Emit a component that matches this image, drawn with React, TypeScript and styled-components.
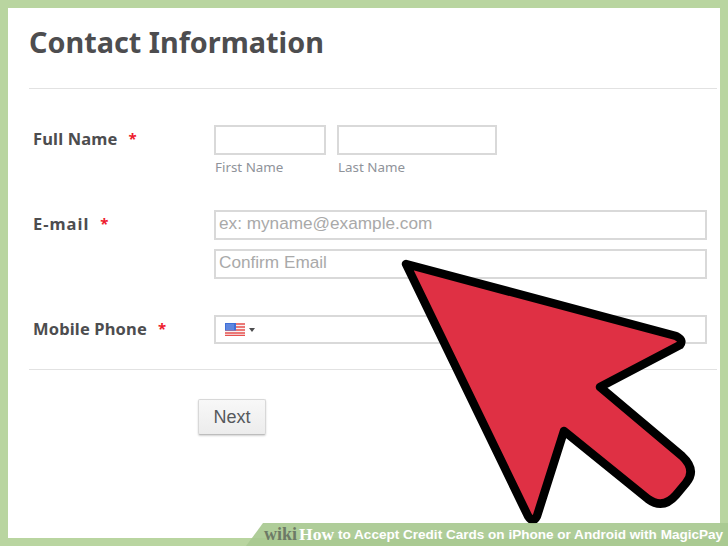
import React from 'react';
import styled, { createGlobalStyle } from 'styled-components';

const GlobalStyle = createGlobalStyle`
  html, body {
    margin: 0;
    padding: 0;
    background: #fff;
  }
`;

const Frame = styled.div`
  position: relative;
  box-sizing: border-box;
  width: 728px;
  height: 546px;
  padding: 8px;
  overflow: hidden;
  background: #b9d5a0;
  font-family: 'Noto Sans', sans-serif;
`;

const Sheet = styled.main`
  box-sizing: border-box;
  height: 530px;
  padding: 0 0 0 21px;
  background: #fff;
  color: #4d4d4f;
`;

const Title = styled.h1`
  margin: 0 3px 0 0;
  height: 81px;
  padding-top: 15px;
  box-sizing: border-box;
  font-size: 28.8px;
  line-height: 38px;
  font-weight: 700;
  border-bottom: 1px solid #e2e2e2;
`;

const Row = styled.section<{ $top: number }>`
  display: grid;
  grid-template-columns: 185px 1fr;
  margin-top: ${(p) => p.$top}px;
  padding-right: 13px;
`;

const Label = styled.div<{ $spacing?: number }>`
  display: flex;
  gap: 11px;
  padding: 3px 0 0 4px;
  font-size: 16.5px;
  line-height: 22px;
  font-weight: 700;
  letter-spacing: ${(p) => p.$spacing ?? 0.15}px;
`;

const Star = styled.span`
  color: #ee1c2e;
  font-size: 15px;
  line-height: 20px;
`;

const Fields = styled.div`
  display: flex;
  flex-direction: column;
  gap: 9px;
`;

const NameFields = styled.div`
  display: flex;
  gap: 11px;
`;

const NameField = styled.div<{ $width: number }>`
  display: flex;
  flex-direction: column;
  gap: 4px;
  width: ${(p) => p.$width}px;
`;

const Box = styled.div`
  box-sizing: border-box;
  display: flex;
  align-items: center;
  height: 30px;
  padding: 0 0 3px 3px;
  border: 2px solid #d9d9d9;
  background: #fff;
  color: #a9a9a9;
  font-family: 'Liberation Sans', Arial, sans-serif;
  font-size: 17.2px;
`;

const Hint = styled.div`
  padding-left: 1px;
  font-size: 13.4px;
  line-height: 17px;
  color: #8f939a;
`;

const PhoneBox = styled(Box)`
  height: 29px;
  gap: 4px;
  padding: 0 0 0 9px;
`;

const Caret = styled.span`
  width: 0;
  height: 0;
  border-left: 3.5px solid transparent;
  border-right: 3.5px solid transparent;
  border-top: 4px solid #4d4d4f;
`;

const Rule = styled.hr`
  margin: 25px 3px 0 0;
  border: 0;
  border-top: 1px solid #e2e2e2;
`;

const Actions = styled.div`
  padding: 29px 0 0 169px;
`;

const NextButton = styled.button`
  box-sizing: border-box;
  width: 68px;
  height: 36px;
  padding: 0;
  border: 1px solid #d8d8d8;
  border-bottom-color: #bdbdbd;
  border-radius: 2px;
  background: linear-gradient(#f8f8f8, #ececec);
  box-shadow: 0 1px 2px rgba(0, 0, 0, 0.18);
  color: #56595c;
  font-family: 'Liberation Sans', Arial, sans-serif;
  font-size: 18px;
`;

const Pointer = styled.svg`
  position: absolute;
  left: 0;
  top: 0;
`;

const Banner = styled.div`
  position: absolute;
  right: 0;
  bottom: 0;
  display: flex;
  align-items: center;
  width: 482px;
  height: 23px;
  padding-left: 18px;
  box-sizing: border-box;
  clip-path: polygon(17px 0, 100% 0, 100% 100%, 0 100%);
  background: rgba(168, 201, 144, 0.92);
  color: #fff;
  font-family: 'Liberation Sans', Arial, sans-serif;
  font-size: 13.55px;
  font-weight: 700;
  white-space: nowrap;
`;

const Wiki = styled.span`
  margin-right: 2px;
  color: #6d7a66;
  font-family: 'Liberation Serif', serif;
  font-size: 18px;
  font-weight: 700;
`;

const How = styled.span`
  margin-right: 4px;
  font-family: 'Liberation Serif', serif;
  font-size: 17.5px;
  font-weight: 700;
`;

function Flag() {
  return (
    <svg width="20" height="13" viewBox="0 0 20 13" aria-hidden="true">
      <rect width="20" height="13" fill="#f7f3f3" />
      <path d="M0 1h20M0 4h20M0 7h20M0 10h20M0 12.5h20" stroke="#e8514f" strokeWidth="1.3" />
      <rect width="11" height="7.5" fill="#3f6fd8" />
      <path d="M1.5 2h8M1.5 4h8M1.5 6h8" stroke="#dfe8ff" strokeWidth="0.8" strokeDasharray="1 1" />
    </svg>
  );
}

export default function App() {
  return (
    <Frame>
      <GlobalStyle />
      <Sheet>
        <Title>Contact Information</Title>
        <Row $top={36}>
          <Label>
            Full Name <Star>*</Star>
          </Label>
          <NameFields>
            <NameField $width={112}>
              <Box />
              <Hint>First Name</Hint>
            </NameField>
            <NameField $width={160}>
              <Box />
              <Hint>Last Name</Hint>
            </NameField>
          </NameFields>
        </Row>
        <Row $top={34}>
          <Label $spacing={1}>
            E-mail <Star>*</Star>
          </Label>
          <Fields>
            <Box>ex: myname@example.com</Box>
            <Box>Confirm Email</Box>
          </Fields>
        </Row>
        <Row $top={36}>
          <Label>
            Mobile Phone <Star>*</Star>
          </Label>
          <PhoneBox>
            <Flag />
            <Caret />
          </PhoneBox>
        </Row>
        <Rule />
        <Actions>
          <NextButton>Next</NextButton>
        </Actions>
      </Sheet>
      <Pointer width="728" height="546" viewBox="0 0 728 546" aria-hidden="true">
        <path
          d="M406 264 L676 336 Q684 340 680 345 L600 387 L682 456 Q697 470 686 483 L676 495 Q663 510 648 499 L564 431 L537 516 Q533 524 528 516 Z"
          fill="#df3044"
          stroke="#000"
          strokeWidth="8.5"
          strokeLinejoin="round"
        />
      </Pointer>
      <Banner>
        <Wiki>wiki</Wiki>
        <How>How</How>
        to Accept Credit Cards on iPhone or Android with MagicPay
      </Banner>
    </Frame>
  );
}
